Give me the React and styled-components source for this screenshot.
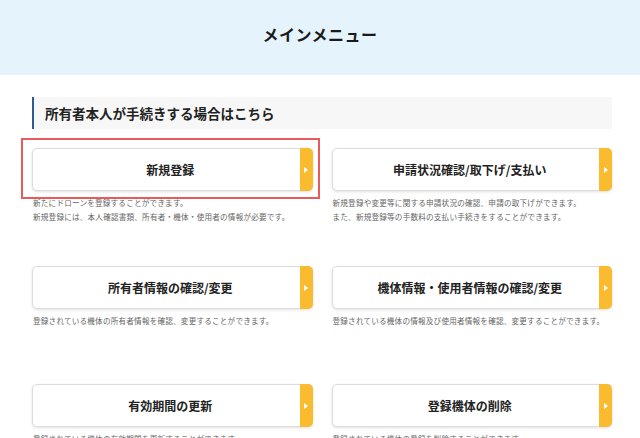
import React from "react";
import styled, { createGlobalStyle } from "styled-components";

const GlobalStyle = createGlobalStyle`
  body {
    margin: 0;
    background: #fff;
    font-family: "Noto Sans CJK JP", "Noto Sans", sans-serif;
    color: #222;
  }
`;

const Header = styled.header`
  height: 75px;
  background: #e5f3fc;
  display: flex;
  align-items: center;
  justify-content: center;
`;

const PageTitle = styled.h1`
  margin: 0 0 8px;
  font-size: 16px;
  font-weight: 700;
  letter-spacing: 0.5px;
  color: #1a1a1a;
`;

const Main = styled.main`
  width: 580px;
  margin: 22px 0 0 32px;
`;

const SectionTitle = styled.h2`
  margin: 0;
  height: 32px;
  display: flex;
  align-items: center;
  padding-left: 11px;
  background: #f7f7f7;
  border-left: 2px solid #2d5b98;
  font-size: 13.5px;
  font-weight: 700;
  color: #222;
`;

const Grid = styled.div`
  margin-top: 19px;
  display: grid;
  grid-template-columns: 1fr 1fr;
  column-gap: 19px;
  row-gap: 42px;
`;

const Item = styled.div`
  display: flex;
  flex-direction: column;
`;

const Card = styled.button`
  position: relative;
  height: 43px;
  display: flex;
  align-items: stretch;
  padding: 0;
  background: #fff;
  border: 1px solid #dcdcdc;
  border-radius: 5px;
  box-shadow: 0 1px 3px rgba(0, 0, 0, 0.12);
  font-family: inherit;
  cursor: pointer;

  ${(p) =>
    p.$highlight &&
    `
    &::after {
      content: "";
      position: absolute;
      top: -11px;
      left: -12px;
      right: -8px;
      bottom: -9px;
      border: 2px solid #e85a5c;
      pointer-events: none;
    }
  `}
`;

const Label = styled.span`
  flex: 1;
  display: flex;
  align-items: center;
  justify-content: center;
  padding-left: 8px;
  font-size: 12px;
  font-weight: 700;
  color: #222;
`;

const Tab = styled.span`
  width: 13px;
  margin: -1px -1px -1px 0;
  background: #fbbb2e;
  border-radius: 0 5px 5px 0;
  display: flex;
  align-items: center;
  justify-content: center;

  &::before {
    content: "";
    border-top: 3px solid transparent;
    border-bottom: 3px solid transparent;
    border-left: 4px solid #fff;
  }
`;

const Desc = styled.p`
  margin: 5px 0 0 1px;
  height: 28px;
  font-size: 7.6px;
  line-height: 14px;
  letter-spacing: 0.2px;
  color: #666;
`;

const items = [
  {
    label: "新規登録",
    desc: ["新たにドローンを登録することができます。", "新規登録には、本人確認書類、所有者・機体・使用者の情報が必要です。"],
    highlight: true,
  },
  {
    label: "申請状況確認/取下げ/支払い",
    desc: ["新規登録や変更等に関する申請状況の確認、申請の取下げができます。", "また、新規登録等の手数料の支払い手続きをすることができます。"],
  },
  {
    label: "所有者情報の確認/変更",
    desc: ["登録されている機体の所有者情報を確認、変更することができます。"],
  },
  {
    label: "機体情報・使用者情報の確認/変更",
    desc: ["登録されている機体の情報及び使用者情報を確認、変更することができます。"],
  },
  {
    label: "有効期間の更新",
    desc: ["登録されている機体の有効期間を更新することができます。"],
  },
  {
    label: "登録機体の削除",
    desc: ["登録されている機体の登録を削除することができます。"],
  },
];

const App = () => (
  <React.Fragment>
    <GlobalStyle />
    <Header>
      <PageTitle>メインメニュー</PageTitle>
    </Header>
    <Main>
      <SectionTitle>所有者本人が手続きする場合はこちら</SectionTitle>
      <Grid>
        {items.map((it) => (
          <Item key={it.label}>
            <Card $highlight={it.highlight}>
              <Label>{it.label}</Label>
              <Tab />
            </Card>
            <Desc>
              {it.desc.map((line, i) => (
                <React.Fragment key={i}>
                  {line}
                  {i < it.desc.length - 1 && <br />}
                </React.Fragment>
              ))}
            </Desc>
          </Item>
        ))}
      </Grid>
    </Main>
  </React.Fragment>
);

export default App;
